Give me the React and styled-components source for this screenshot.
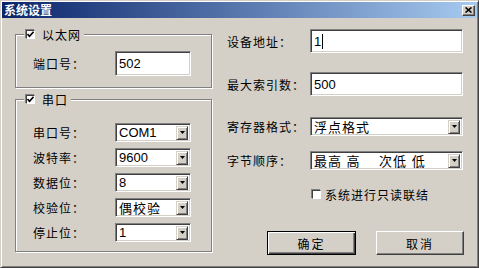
import React from 'react'
import styled, { createGlobalStyle } from 'styled-components'

const GlobalStyle = createGlobalStyle`
  html, body {
    margin: 0;
    padding: 0;
    background: #d4d0c8;
  }

  body {
    font-family: "Noto Sans CJK SC", "Liberation Sans", sans-serif;
    font-size: 12px;
    color: #000;
  }
`

const Window = styled.div`
  width: 479px;
  height: 268px;
  box-sizing: border-box;
  background: #d4d0c8;
  border: 1px solid;
  border-color: #d4d0c8 #404040 #404040 #d4d0c8;
  box-shadow: inset 1px 1px 0 #fff, inset -1px -1px 0 #808080;
  padding: 1px;
  display: flex;
  flex-direction: column;
`

const TitleBar = styled.div`
  height: 16px;
  display: flex;
  align-items: center;
  justify-content: space-between;
  background: linear-gradient(to right, #0a246a, #a6caf0);
  padding: 0 2px 0 2px;
`

const Title = styled.span`
  color: #fff;
  font-weight: bold;
  font-size: 12px;
  line-height: 16px;
  letter-spacing: 0;
`

const CloseButton = styled.div`
  width: 13px;
  height: 11px;
  box-sizing: border-box;
  background: #d4d0c8;
  border: 1px solid;
  border-color: #fff #404040 #404040 #fff;
  box-shadow: inset -1px -1px 0 #808080;
  display: flex;
  align-items: center;
  justify-content: center;
`

const Body = styled.div`
  flex: 1;
  display: flex;
  padding-left: 13px;
`

const LeftColumn = styled.div`
  width: 197px;
  padding-top: 16px;
  display: flex;
  flex-direction: column;
`

const RightColumn = styled.div`
  margin-left: 15px;
  padding-top: 11px;
  display: flex;
  flex-direction: column;
`

const GroupBox = styled.div`
  border: 1px solid #808080;
  box-shadow: 1px 1px 0 #fff, inset 1px 1px 0 #fff;
  margin-top: ${p => p.$gap || 0}px;
  padding: 0 0 ${p => p.$bottom}px 17px;
  display: flex;
  flex-direction: column;
  gap: 6px;
`

const GroupHeader = styled.div`
  align-self: flex-start;
  margin: -9px 0 ${p => p.$space}px -9px;
  height: 16px;
  padding: 0 3px 0 2px;
  background: #d4d0c8;
  display: flex;
  align-items: center;
  gap: 7px;
  letter-spacing: 1px;
`

const Box = styled.span`
  width: 9px;
  height: 9px;
  box-sizing: border-box;
  background: #fff;
  border: 1px solid;
  border-color: #404040 #fff #fff #404040;
  box-shadow: 0 0 0 0 transparent, -1px -1px 0 #808080;
  display: inline-flex;
  align-items: center;
  justify-content: center;
`

const Row = styled.div`
  display: flex;
  align-items: center;
  height: ${p => p.$h}px;
  margin-top: ${p => p.$top || 0}px;
`

const Label = styled.span`
  width: ${p => p.$w}px;
  flex-shrink: 0;
  letter-spacing: 1px;
  white-space: nowrap;
`

const TextInput = styled.div`
  width: ${p => p.$w}px;
  height: ${p => p.$h}px;
  box-sizing: border-box;
  background: #fff;
  border: 1px solid;
  border-color: #808080 #fff #fff #808080;
  box-shadow: inset 1px 1px 0 #404040, inset -1px -1px 0 #d4d0c8;
  padding-left: 3px;
  display: flex;
  align-items: center;
  font-family: "Liberation Sans", "Noto Sans CJK SC", sans-serif;
  font-size: 13px;
`

const Caret = styled.span`
  display: inline-block;
  width: 1px;
  height: 15px;
  background: #000;
  margin-left: 1px;
`

const Combo = styled.div`
  width: ${p => p.$w}px;
  height: 19px;
  box-sizing: border-box;
  background: #fff;
  border: 1px solid;
  border-color: #808080 #fff #fff #808080;
  box-shadow: inset 1px 1px 0 #404040, inset -1px -1px 0 #d4d0c8;
  padding: 2px 2px 2px 3px;
  display: flex;
  align-items: center;
  justify-content: space-between;
`

const ComboText = styled.span`
  font-family: "Liberation Sans", "Noto Sans CJK SC", sans-serif;
  font-size: 13px;
  letter-spacing: ${p => (p.$cjk ? '1px' : '0')};
  white-space: pre;
`

const DropButton = styled.span`
  width: 12px;
  height: 14px;
  box-sizing: border-box;
  background: #d4d0c8;
  border: 1px solid;
  border-color: #d4d0c8 #404040 #404040 #d4d0c8;
  box-shadow: inset 1px 1px 0 #fff, inset -1px -1px 0 #808080;
  display: flex;
  align-items: center;
  justify-content: center;
`

const CheckRow = styled.div`
  display: flex;
  align-items: center;
  gap: 4px;
  height: 16px;
  margin: 16px 0 0 85px;
  letter-spacing: 1px;
`

const ButtonRow = styled.div`
  display: flex;
  gap: 20px;
  margin: 29px 0 0 40px;
`

const Button = styled.div`
  width: ${p => p.$w}px;
  height: 24px;
  box-sizing: border-box;
  background: #d4d0c8;
  border: 1px solid;
  border-color: ${p => (p.$default ? '#000' : '#fff #404040 #404040 #fff')};
  box-shadow: ${p => (p.$default
    ? 'inset 1px 1px 0 #fff, inset -1px -1px 0 #404040, inset -2px -2px 0 #808080'
    : 'inset -1px -1px 0 #808080')};
  display: flex;
  align-items: center;
  justify-content: center;
  letter-spacing: 2px;
`

const Tick = () => (
  <svg width="7" height="7" viewBox="0 0 7 7">
    <path d="M0.5 3 L2.5 5.2 L6.5 0.8" fill="none" stroke="#000" strokeWidth="1.6" />
  </svg>
)

const CheckBox = ({ checked }) => <Box>{checked && <Tick />}</Box>

const Arrow = () => (
  <svg width="5" height="3" viewBox="0 0 5 3">
    <path d="M0 0 H5 L2.5 3 Z" fill="#000" />
  </svg>
)

const Select = ({ w, value, cjk }) => (
  <Combo $w={w}>
    <ComboText $cjk={cjk}>{value}</ComboText>
    <DropButton><Arrow /></DropButton>
  </Combo>
)

const serialRows = [
  { label: '串口号：', value: 'COM1' },
  { label: '波特率：', value: '9600' },
  { label: '数据位：', value: '8' },
  { label: '校验位：', value: '偶校验', cjk: true },
  { label: '停止位：', value: '1' },
]

export default function App() {
  return (
    <>
      <GlobalStyle />
      <Window>
        <TitleBar>
          <Title>系统设置</Title>
          <CloseButton>
            <svg width="7" height="6" viewBox="0 0 7 6">
              <path d="M0.5 0.5 L6.5 5.5 M6.5 0.5 L0.5 5.5" stroke="#000" strokeWidth="1.6" />
            </svg>
          </CloseButton>
        </TitleBar>
        <Body>
          <LeftColumn>
            <GroupBox $bottom={11}>
              <GroupHeader $space={3}>
                <CheckBox checked />
                <span>以太网</span>
              </GroupHeader>
              <Row $h={25}>
                <Label $w={82}>端口号：</Label>
                <TextInput $w={76} $h={25}>502</TextInput>
              </Row>
            </GroupBox>
            <GroupBox $gap={11} $bottom={9}>
              <GroupHeader $space={10}>
                <CheckBox checked />
                <span>串口</span>
              </GroupHeader>
              {serialRows.map(row => (
                <Row key={row.label} $h={19}>
                  <Label $w={82}>{row.label}</Label>
                  <Select w={76} value={row.value} cjk={row.cjk} />
                </Row>
              ))}
            </GroupBox>
          </LeftColumn>
          <RightColumn>
            <Row $h={24}>
              <Label $w={83}>设备地址：</Label>
              <TextInput $w={153} $h={24}>1<Caret /></TextInput>
            </Row>
            <Row $h={24} $top={19}>
              <Label $w={83}>最大索引数：</Label>
              <TextInput $w={153} $h={24}>500</TextInput>
            </Row>
            <Row $h={19} $top={21}>
              <Label $w={83}>寄存器格式：</Label>
              <Select w={153} value="浮点格式" cjk />
            </Row>
            <Row $h={19} $top={15}>
              <Label $w={83}>字节顺序：</Label>
              <Select w={153} value={'最高 高    次低 低'} cjk />
            </Row>
            <CheckRow>
              <CheckBox />
              <span>系统进行只读联结</span>
            </CheckRow>
            <ButtonRow>
              <Button $w={89} $default>确定</Button>
              <Button $w={88}>取消</Button>
            </ButtonRow>
          </RightColumn>
        </Body>
      </Window>
    </>
  )
}
